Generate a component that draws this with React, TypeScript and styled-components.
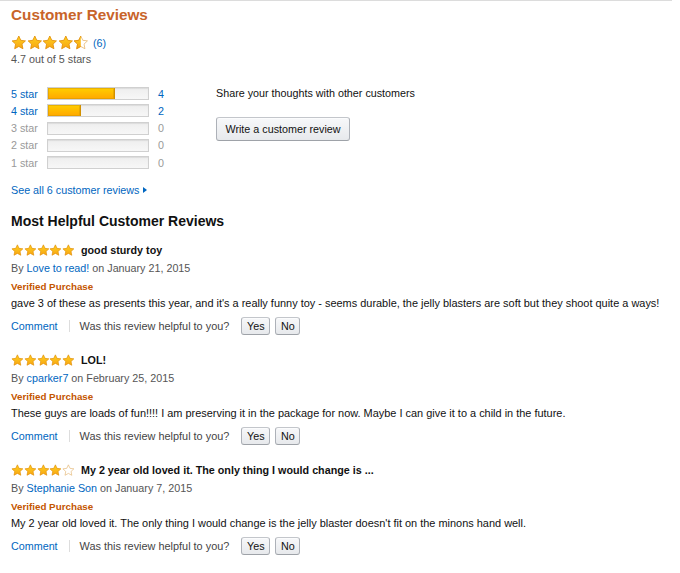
import React, { useId } from "react";
import styled, { createGlobalStyle } from "styled-components";

const Global = createGlobalStyle`
  html, body { margin: 0; padding: 0; background: #fff; }
  body { font-family: "Liberation Sans", Arial, sans-serif; color: #111; }
`;

const Page = styled.div`
  width: 672px;
  border-top: 1px solid #dcdcdc;
  padding-left: 11px;
  box-sizing: border-box;
  font-size: 10.75px;
`;

const Heading = styled.h2`
  margin: 4px 0 0;
  font-size: 15.3px;
  line-height: 20px;
  font-weight: bold;
  color: #c8642a;
`;

const StarRow = styled.div`
  display: flex;
  align-items: center;
  height: 18px;
  margin-top: 9px;
`;

const StarsWrap = styled.span<{ $size: number }>`
  display: inline-flex;
  height: ${(p) => p.$size}px;
  svg { width: ${(p) => p.$size}px; height: ${(p) => p.$size}px; display: block; }
`;

const Link = styled.a`
  color: #0066c0;
  text-decoration: none;
  cursor: pointer;
`;

const CountLink = styled(Link)`
  margin-left: 4px;
  font-size: 10.75px;
`;

const Muted = styled.div`
  color: #555;
  line-height: 14px;
`;

const Summary = styled.div`
  display: grid;
  grid-template-columns: 205px auto;
  margin-top: 19px;
`;

const Histogram = styled.div`
  display: flex;
  flex-direction: column;
`;

const HistRow = styled.div<{ $active: boolean }>`
  display: grid;
  grid-template-columns: 36px 102px auto;
  align-items: center;
  height: 17.25px;
  color: ${(p) => (p.$active ? "#0066c0" : "#999")};
`;

const HistCount = styled.span`
  margin-left: 9px;
`;

const Bar = styled.div`
  height: 13px;
  box-sizing: border-box;
  border: 1px solid #d0d0d0;
  background: linear-gradient(to bottom, #eeeeee, #f7f7f7);
  box-shadow: inset 0 1px 1px rgba(0, 0, 0, 0.08);
  overflow: hidden;
`;

const BarFill = styled.div`
  height: 100%;
  box-sizing: border-box;
  background: linear-gradient(to bottom, #ffce00, #ffa700);
  border-right: 1px solid #d29000;
  box-shadow: inset 0 0 0 1px rgba(210, 150, 0, 0.5);
`;

const SeeAll = styled(Link)`
  display: inline-flex;
  align-items: center;
  line-height: 14px;
  margin-top: 11.5px;
  svg { margin-left: 4px; }
`;

const Side = styled.div`
  display: flex;
  flex-direction: column;
  align-items: flex-start;
`;

const ShareText = styled.div`
  line-height: 17.25px;
  color: #111;
`;

const Button = styled.button<{ $w?: number; $h?: number }>`
  font-family: "Liberation Sans", Arial, sans-serif;
  font-size: 10.75px;
  color: #111;
  width: ${(p) => (p.$w ? `${p.$w}px` : "auto")};
  height: ${(p) => (p.$h ? `${p.$h}px` : "auto")};
  padding: 0;
  border: 1px solid #adb1b8;
  border-top-color: #c3c6cb;
  border-bottom-color: #9ea2a8;
  border-radius: 3px;
  background: linear-gradient(to bottom, #f7f8fa, #e7e9ec);
  box-shadow: inset 0 1px 0 rgba(255, 255, 255, 0.6);
  cursor: pointer;
`;

const WriteButton = styled(Button)`
  margin-top: 14.4px;
`;

const SectionTitle = styled.h3`
  margin: 15px 0 0;
  font-size: 14px;
  line-height: 18px;
  font-weight: bold;
  color: #111;
`;

const ReviewList = styled.div`
  margin-top: 12px;
  display: flex;
  flex-direction: column;
  gap: 17px;
`;

const Review = styled.div`
  display: flex;
  flex-direction: column;
`;

const ReviewTitle = styled.div`
  display: flex;
  align-items: center;
  height: 17px;
  font-weight: bold;
  color: #111;
  gap: 6px;
`;

const Byline = styled.div`
  line-height: 18px;
  color: #555;
`;

const Verified = styled.div`
  margin-top: 2px;
  line-height: 16px;
  font-size: 9.8px;
  font-weight: bold;
  color: #c45500;
`;

const Body = styled.div`
  line-height: 16px;
  font-size: 10.95px;
  color: #111;
  white-space: nowrap;
`;

const ActionRow = styled.div`
  margin-top: 6px;
  height: 18px;
  display: flex;
  align-items: center;
`;

const Separator = styled.span`
  width: 1px;
  height: 12px;
  background: #dddddd;
  margin: 0 10px 0 11px;
`;

const Helpful = styled.span`
  color: #444;
  margin-right: 12px;
  font-size: 10.9px;
`;

const VoteButtons = styled.div`
  display: flex;
  gap: 5px;
`;

type Kind = "full" | "half" | "empty";

function Star({ kind }: { kind: Kind }) {
  const id = useId().replace(/:/g, "");
  const d =
    "M10 1.3l2.55 5.5 6 .75-4.4 4.15 1.15 5.95L10 14.7l-5.3 2.95 1.15-5.95L1.45 7.55l6-.75z";
  return (
    <svg viewBox="0 0 20 20">
      <defs>
        <linearGradient id={`g${id}`} x1="0" y1="0" x2="0" y2="1">
          <stop offset="0" stopColor="#ffd21f" />
          <stop offset="1" stopColor="#f7a414" />
        </linearGradient>
        <clipPath id={`c${id}`}>
          <rect x="0" y="0" width="10" height="20" />
        </clipPath>
      </defs>
      {kind === "full" && (
        <path d={d} fill={`url(#g${id})`} stroke="#e08a00" strokeWidth="1" strokeLinejoin="round" />
      )}
      {kind === "half" && (
        <>
          <path d={d} fill="#fff" stroke="#e7b46a" strokeWidth="1" strokeLinejoin="round" />
          <path
            d={d}
            fill={`url(#g${id})`}
            stroke="#e08a00"
            strokeWidth="1"
            strokeLinejoin="round"
            clipPath={`url(#c${id})`}
          />
        </>
      )}
      {kind === "empty" && (
        <path d={d} fill="#fff" stroke="#e3b46e" strokeWidth="1" strokeLinejoin="round" />
      )}
    </svg>
  );
}

function Stars({ value, size }: { value: number; size: number }) {
  const kinds: Kind[] = [1, 2, 3, 4, 5].map((i) =>
    value >= i ? "full" : value >= i - 0.5 ? "half" : "empty"
  );
  return (
    <StarsWrap $size={size}>
      {kinds.map((k, i) => (
        <Star key={i} kind={k} />
      ))}
    </StarsWrap>
  );
}

const histogram = [
  { label: "5 star", count: 4 },
  { label: "4 star", count: 2 },
  { label: "3 star", count: 0 },
  { label: "2 star", count: 0 },
  { label: "1 star", count: 0 },
];

const reviews = [
  {
    stars: 5,
    title: "good sturdy toy",
    author: "Love to read!",
    date: "January 21, 2015",
    body:
      "gave 3 of these as presents this year, and it's a really funny toy - seems durable, the jelly blasters are soft but they shoot quite a ways!",
  },
  {
    stars: 5,
    title: "LOL!",
    author: "cparker7",
    date: "February 25, 2015",
    body:
      "These guys are loads of fun!!!! I am preserving it in the package for now. Maybe I can give it to a child in the future.",
  },
  {
    stars: 4,
    title: "My 2 year old loved it. The only thing I would change is ...",
    author: "Stephanie Son",
    date: "January 7, 2015",
    body:
      "My 2 year old loved it. The only thing I would change is the jelly blaster doesn't fit on the minons hand well.",
  },
];

export default function App() {
  const total = 6;
  return (
    <>
      <Global />
      <Page>
        <Heading>Customer Reviews</Heading>
        <StarRow>
          <Stars value={4.5} size={15.6} />
          <CountLink>(6)</CountLink>
        </StarRow>
        <Muted>4.7 out of 5 stars</Muted>

        <Summary>
          <div>
            <Histogram>
              {histogram.map((h) => (
                <HistRow key={h.label} $active={h.count > 0}>
                  <span>{h.label}</span>
                  <Bar>
                    {h.count > 0 && <BarFill style={{ width: `${(h.count / total) * 100}%` }} />}
                  </Bar>
                  <HistCount>{h.count}</HistCount>
                </HistRow>
              ))}
            </Histogram>
            <SeeAll>
              See all 6 customer reviews
              <svg width="4" height="6" viewBox="0 0 4 6">
                <path d="M0 0L4 3L0 6z" fill="#0066c0" />
              </svg>
            </SeeAll>
          </div>
          <Side>
            <ShareText>Share your thoughts with other customers</ShareText>
            <WriteButton $w={134} $h={24}>
              Write a customer review
            </WriteButton>
          </Side>
        </Summary>

        <SectionTitle>Most Helpful Customer Reviews</SectionTitle>
        <ReviewList>
          {reviews.map((r) => (
            <Review key={r.title}>
              <ReviewTitle>
                <Stars value={r.stars} size={12.8} />
                <span>{r.title}</span>
              </ReviewTitle>
              <Byline>
                By <Link>{r.author}</Link> on {r.date}
              </Byline>
              <Verified>Verified Purchase</Verified>
              <Body>{r.body}</Body>
              <ActionRow>
                <Link>Comment</Link>
                <Separator />
                <Helpful>Was this review helpful to you?</Helpful>
                <VoteButtons>
                  <Button $w={29} $h={18}>Yes</Button>
                  <Button $w={25} $h={18}>No</Button>
                </VoteButtons>
              </ActionRow>
            </Review>
          ))}
        </ReviewList>
      </Page>
    </>
  );
}
